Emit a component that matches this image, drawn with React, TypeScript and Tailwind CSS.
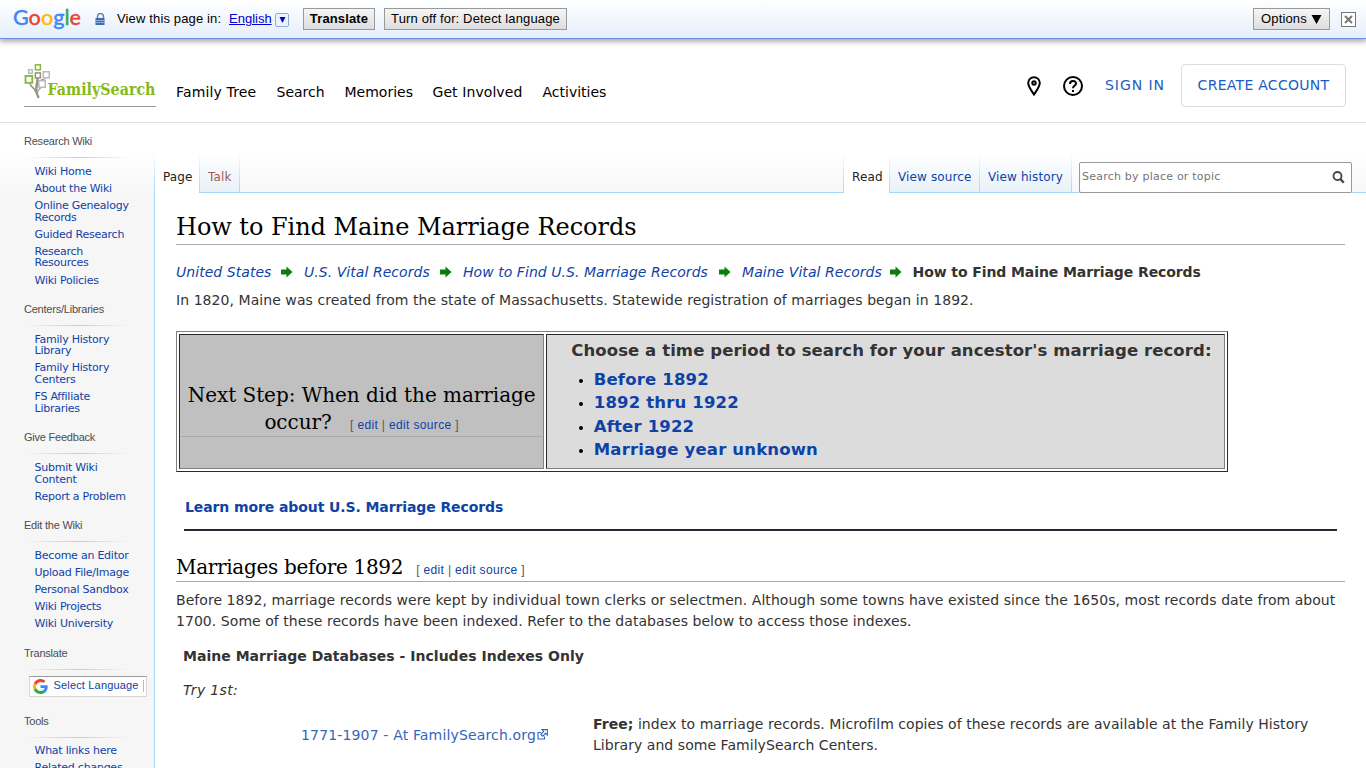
import React from 'react';

type NavGroup = { title: string; items: string[][] };

// each item is a list of text lines
const GROUPS: NavGroup[] = [
  {
    title: 'Research Wiki',
    items: [['Wiki Home'], ['About the Wiki'], ['Online Genealogy', 'Records'], ['Guided Research'], ['Research', 'Resources'], ['Wiki Policies']],
  },
  {
    title: 'Centers/Libraries',
    items: [['Family History', 'Library'], ['Family History', 'Centers'], ['FS Affiliate', 'Libraries']],
  },
  {
    title: 'Give Feedback',
    items: [['Submit Wiki', 'Content'], ['Report a Problem']],
  },
  {
    title: 'Edit the Wiki',
    items: [['Become an Editor'], ['Upload File/Image'], ['Personal Sandbox'], ['Wiki Projects'], ['Wiki University']],
  },
];

const PERIODS = ['Before 1892', '1892 thru 1922', 'After 1922', 'Marriage year unknown'];

const CRUMBS = [
  { label: 'United States', width: 'w-[95px]' },
  { label: 'U.S. Vital Records', width: 'w-[126px]' },
  { label: 'How to Find U.S. Marriage Records', width: 'w-[246px]' },
  { label: 'Maine Vital Records', width: 'w-[137.500px]' },
];

const GoogleLogo = () => (
  <svg width="72" height="30" viewBox="0 0 72 30" className="shrink-0 overflow-visible">
    <text x="1" y="20" fontFamily="Lato, 'Open Sans', sans-serif" fontSize="22" fontWeight="500" strokeWidth="0.3" textLength="68" lengthAdjust="spacingAndGlyphs">
      <tspan fill="#4285f4" stroke="#4285f4">G</tspan>
      <tspan fill="#ea4335" stroke="#ea4335">o</tspan>
      <tspan fill="#fbbc05" stroke="#fbbc05">o</tspan>
      <tspan fill="#4285f4" stroke="#4285f4">g</tspan>
      <tspan fill="#34a853" stroke="#34a853">l</tspan>
      <tspan fill="#ea4335" stroke="#ea4335">e</tspan>
    </text>
  </svg>
);

const FamilySearchLogo = () => (
  <svg width="133" height="42" viewBox="0 0 133 42" className="overflow-visible">
    <g fill="none" stroke="#9a9187" strokeLinecap="round">
      <path d="M13.500 14c0 5-1.500 8-1.200 12 .2 3 .7 5 2 7" strokeWidth="2.400" />
      <path d="M6 19.500c.5 3.500 4 3.500 5.500 8" strokeWidth="1.600" />
      <path d="M21 15c-3 0-6 1-7.500 7M17 23.500c-1.500 1-3 2-3.500 5" strokeWidth="1.200" />
    </g>
    <g fill="#fff" strokeWidth="1.500">
      <rect x="11.400" y="0.800" width="5" height="5" stroke="#87b940" />
      <rect x="4.700" y="5.700" width="3.600" height="3.600" stroke="#b9b9b9" />
      <rect x="11.400" y="8.900" width="5" height="5" stroke="#9a9187" />
      <rect x="19.300" y="7.800" width="6" height="6" stroke="#b9b9b9" />
      <rect x="1.500" y="12" width="6.800" height="6.800" stroke="#87b940" strokeWidth="1.900" />
      <rect x="14.800" y="16.700" width="6.500" height="6.500" stroke="#b9b9b9" />
    </g>
    <text x="23.500" y="31" fill="#87b914" fontFamily="'DejaVu Serif', serif" fontSize="16.5" fontWeight="700" textLength="108" lengthAdjust="spacingAndGlyphs">
      FamilySearch
    </text>
  </svg>
);

const GoogleG = () => (
  <svg width="15" height="15" viewBox="0 0 48 48">
    <path fill="#ea4335" d="M24 9.5c3.5 0 6.700 1.200 9.200 3.600l6.900-6.900C35.900 2.400 30.500 0 24 0 14.600 0 6.500 5.400 2.600 13.200l8 6.200C12.400 13.700 17.700 9.500 24 9.500z" />
    <path fill="#4285f4" d="M47 24.500c0-1.600-.2-3.100-.4-4.500H24v9h12.900c-.6 3-2.300 5.500-4.800 7.200l7.700 6C44.400 38 47 31.800 47 24.500z" />
    <path fill="#fbbc05" d="M10.500 28.600a14.500 14.500 0 0 1 0-9.200l-8-6.200a24 24 0 0 0 0 21.600l8-6.200z" />
    <path fill="#34a853" d="M24 48c6.500 0 11.900-2.100 15.900-5.800l-7.700-6c-2.200 1.500-4.900 2.300-8.200 2.300-6.300 0-11.600-4.200-13.500-9.900l-8 6.200C6.500 42.600 14.600 48 24 48z" />
  </svg>
);

const GreenArrow = () => (
  <svg width="12" height="12" viewBox="0 0 12 12" className="mr-[11px] ml-[10px] shrink-0">
    <path d="M0 3.500h5.500V0.500L11.500 6 5.500 11.500v-3H0z" fill="#0a800a" />
  </svg>
);

const EditLinks = () => (
  <span className="font-['Liberation_Sans',Arial,sans-serif] text-[12px] tracking-[0.350px] text-[#54595d]">
    [ <a className="text-[#0f42a6]">edit</a> | <a className="text-[#0f42a6]">edit source</a> ]
  </span>
);

const SideHeading = ({ children }: { children: React.ReactNode }) => (
  <>
    <h3 className="h-4 text-[11px] leading-4 tracking-[-0.220px] text-[#4d4d4d] font-['Liberation_Sans',Arial,sans-serif]">{children}</h3>
    <div className="mt-2 ml-[2px] h-px w-[104px] bg-linear-to-r from-transparent via-[#c8ccd1] to-transparent" />
  </>
);

const SideLinks = ({ items }: { items: string[][] }) => (
  <ul className="pt-[7.700px] pl-[10.500px] text-[11px] leading-[11.700px] tracking-[-0.240px] whitespace-nowrap text-[#0f42a6]">
    {items.map((lines) => (
      <li key={lines.join(' ')} className="pb-[5.400px]">
        {lines.map((line) => (
          <span key={line} className="block">{line}</span>
        ))}
      </li>
    ))}
  </ul>
);

const TranslateBar = () => (
  <div className="relative z-10 flex h-[39px] items-start border-b border-[#6b90da] bg-linear-to-b from-white to-[#e5effb] pt-2 pl-3 text-[13px] tracking-[0.140px] text-black shadow-[0_1px_6px_1px_rgba(0,0,0,0.4)] font-['Liberation_Sans',Arial,sans-serif]">
    <div className="-mt-[3px] tracking-normal"><GoogleLogo /></div>
    <svg width="11" height="12" viewBox="0 0 11 12" className="mt-[5px] ml-[11px]">
      <path d="M2.500 5V3.500a3 3 0 0 1 6 0V5" fill="none" stroke="#5b7fae" strokeWidth="1.400" />
      <rect x="0.500" y="5" width="9" height="7" fill="#3c6cb4" />
      <path d="M1 7.500h8M1 9.500h8" stroke="#a9c0e2" strokeWidth="0.800" />
    </svg>
    <span className="mt-[2px] ml-[11px] w-28 leading-[18px] whitespace-nowrap">View this page in:</span>
    <span className="mt-[2px] w-[43px] leading-[18px] tracking-normal text-[#0000cc] underline">English</span>
    <span className="mt-[5px] ml-[3px] flex h-[14px] w-[14px] items-center justify-center rounded-[2px] border border-[#93a9d8] bg-[#eef4ff]">
      <svg width="7" height="6" viewBox="0 0 7 6"><path d="M0.500 0h6L3.500 6z" fill="#0000cc" /></svg>
    </span>
    <button className="ml-[14px] h-[22px] w-[72px] border border-[#999] bg-linear-to-b from-[#f6f6f6] to-[#ddd] leading-5 font-bold whitespace-nowrap">Translate</button>
    <button className="ml-[9px] h-[22px] w-[183px] border border-[#999] bg-linear-to-b from-[#f6f6f6] to-[#ddd] leading-5 whitespace-nowrap">Turn off for: Detect language</button>
    <button className="ml-auto flex h-[22px] w-[77px] items-center justify-center gap-1 border border-[#999] bg-linear-to-b from-[#f6f6f6] to-[#ddd]">
      Options
      <svg width="11" height="9" viewBox="0 0 11 9"><path d="M0.500 0h10L5.500 9z" /></svg>
    </button>
    <span className="mt-1 mr-[10px] ml-[11px] flex h-[15px] w-[15px] items-center justify-center border border-[#777] bg-white">
      <svg width="9" height="9" viewBox="0 0 9 9"><path d="M1 1l7 7M8 1L1 8" stroke="#777" strokeWidth="2" /></svg>
    </span>
  </div>
);

const SiteHeader = () => (
  <header className="flex h-[84px] items-start border-b border-[#e0e0e0] bg-white text-[14px] text-black">
    <div className="mt-[25px] ml-6 h-[43px] w-[132px] border-b border-[#999] whitespace-nowrap">
      <FamilySearchLogo />
    </div>
    <nav className="mt-[43px] ml-5 flex leading-5 whitespace-nowrap">
      <span className="w-[100.500px] tracking-[0.150px]">Family Tree</span>
      <span className="w-[68px]">Search</span>
      <span className="w-[88px]">Memories</span>
      <span className="w-[110px] tracking-[0.080px]">Get Involved</span>
      <span>Activities</span>
    </nav>
    <div className="mt-[25px] mr-5 ml-auto flex h-[43px] items-center whitespace-nowrap text-[#1b5cc4]">
      <svg width="14" height="20" viewBox="0 0 14 20" fill="none" stroke="#000" strokeWidth="2">
        <path d="M7 18.500C4 14 1.200 10.500 1.200 7a5.800 5.800 0 0 1 11.600 0c0 3.500-2.800 7-5.800 11.500z" />
        <circle cx="7" cy="7" r="1.700" />
      </svg>
      <svg width="20" height="20" viewBox="0 0 20 20" fill="none" stroke="#000" strokeWidth="2" className="ml-[22px]">
        <circle cx="10" cy="10" r="9" />
        <path d="M7 8c0-4 6-4 6-.5 0 2.300-3 2.300-3 4.700" />
        <path d="M10 14v2" />
      </svg>
      <span className="ml-[22px] w-[76px] tracking-[0.950px]">SIGN IN</span>
      <button className="h-[43px] w-[165px] rounded-[4px] border border-[#dcdcdc] tracking-[0.280px]">CREATE ACCOUNT</button>
    </div>
  </header>
);

const Sidebar = () => (
  <aside className="w-[154px] shrink-0 pt-[10px] pl-6">
    {GROUPS.map((g) => (
      <section key={g.title} className="mb-[9.300px]">
        <SideHeading>{g.title}</SideHeading>
        <SideLinks items={g.items} />
      </section>
    ))}
    <section className="mb-4">
      <SideHeading>Translate</SideHeading>
      <div className="mt-[6px] ml-[5px] flex h-[21px] w-[118px] items-center border border-[#d5d5d5] border-t-[#9b9b9b] bg-white pl-[3px] font-['Liberation_Sans',Arial,sans-serif] text-[11px] whitespace-nowrap text-[#0f42a6]">
        <GoogleG />
        <span className="-mt-[2px] ml-[5.500px] w-[89px] tracking-[0.170px]">Select Language</span>
        <span className="h-3 w-px bg-[#bbb]" />
      </div>
    </section>
    <section>
      <SideHeading>Tools</SideHeading>
      <SideLinks items={[['What links here'], ['Related changes']]} />
    </section>
  </aside>
);

// vertical hairline that fades in towards the baseline of the tabs
const TabEdge = () => <i className="h-[39px] w-px shrink-0 bg-linear-to-b from-transparent to-[#a7d7f9]" />;

const Tab = ({ width, className = '', children }: { width: string; className?: string; children: React.ReactNode }) => (
  <>
    <span className={`${width} h-[39px] bg-linear-to-b from-white to-[#e8f2f8] pt-[8px] pl-2 ${className}`}>{children}</span>
    <TabEdge />
  </>
);

const ActiveTab = ({ width, children }: { width: string; children: React.ReactNode }) => (
  <>
    <TabEdge />
    <span className={`${width} -mb-px h-[40px] bg-white pt-[8px] pl-2 text-[#222]`}>{children}</span>
    <TabEdge />
  </>
);

const Tabs = () => (
  <div className="flex h-[70px] items-end border-b border-[#a7d7f9] text-[12px] leading-8 tracking-[0.120px] whitespace-nowrap text-[#0f42a6]">
    <ActiveTab width="w-[44px]">Page</ActiveTab>
    <Tab width="w-[39px]" className="text-[#a55858]">Talk</Tab>
    <div className="ml-auto flex items-end">
      <ActiveTab width="w-[45px]">Read</ActiveTab>
      <Tab width="w-[89px]">View source</Tab>
      <Tab width="w-[91px]">View history</Tab>
    </div>
    <div className="-mb-px mr-[14px] ml-[7px] flex h-[31px] w-[273px] items-center justify-between rounded-[2px] border border-[#999] bg-white pr-[6px] pl-[2px] text-[11px] text-[#757575]">
      <span className="-mt-[2px] tracking-[0.220px]">Search by place or topic</span>
      <svg width="13" height="13" viewBox="0 0 13 13" fill="none" stroke="#444" strokeWidth="1.800">
        <circle cx="5.500" cy="5" r="4" />
        <path d="M8.300 8l3.500 3.700" strokeWidth="2.300" />
      </svg>
    </div>
  </div>
);

const Article = () => (
  <main className="h-[575px] overflow-hidden border-l border-[#a7d7f9] bg-white pr-[21px] pl-[21px] text-[14px] leading-[21px] tracking-[0.050px] text-[#333]">
    <h1 className="h-[52px] border-b border-[#aaa] pt-[17px] font-['DejaVu_Serif',serif] text-[24px] leading-[34px] tracking-[-0.050px] whitespace-nowrap text-black">
      How to Find Maine Marriage Records
    </h1>
    <div className="mt-[16px] flex h-[22px] items-center whitespace-nowrap">
      {CRUMBS.map((c) => (
        <React.Fragment key={c.label}>
          <a className={`${c.width} shrink-0 text-[#0f42a6] italic`}>{c.label}</a>
          <GreenArrow />
        </React.Fragment>
      ))}
      <b className="tracking-[-0.090px]">How to Find Maine Marriage Records</b>
    </div>
    <p className="mt-[7px] tracking-[0.060px] whitespace-nowrap">
      In 1820, Maine was created from the state of Massachusetts. Statewide registration of marriages began in 1892.
    </p>

    <div className="mt-[20px] flex h-[141px] w-[1052px] gap-[2px] border border-[#2b2b2b] border-t-[#808080] border-l-[#808080] p-[2px]">
      <div className="w-[366px] border border-[#808080] border-t-[#2b2b2b] border-l-[#2b2b2b] bg-[#c0c0c0] px-px pt-[47px]">
        <h2 className="h-[55px] border-b border-[#aaa] text-center font-['DejaVu_Serif',serif] text-[20px] leading-[27px] tracking-[-0.050px] whitespace-nowrap text-black">
          Next Step: When did the marriage
          <br />
          occur? <span className="ml-3"><EditLinks /></span>
        </h2>
      </div>
      <div className="w-[680px] border border-[#808080] border-t-[#2b2b2b] border-l-[#2b2b2b] bg-[#dcdcdc] pt-1 pl-6 text-[16.500px] font-bold tracking-[0.080px] whitespace-nowrap">
        <p className="leading-6">Choose a time period to search for your ancestor's marriage record:</p>
        <ul className="mt-[5px] list-disc pl-[22.500px] leading-[23.400px] tracking-[0.160px] marker:text-[13px] marker:text-black">
          {PERIODS.map((p) => (
            <li key={p}><a className="text-[#0f42a6]">{p}</a></li>
          ))}
        </ul>
      </div>
    </div>

    <div className="mx-2 mt-[25px] h-[34px] border-b-2 border-[#2b2533] pl-px">
      <a className="font-bold tracking-[-0.100px] text-[#0f42a6]">Learn more about U.S. Marriage Records</a>
    </div>

    <h2 className="mt-[20px] flex h-[31px] items-baseline border-b border-[#aaa] pt-[3px] font-['DejaVu_Serif',serif] text-[20px] leading-[27px] tracking-[-0.320px] whitespace-nowrap text-black">
      Marriages before 1892 <span className="ml-[13px]"><EditLinks /></span>
    </h2>
    <p className="mt-[8px] whitespace-nowrap">
      Before 1892, marriage records were kept by individual town clerks or selectmen. Although some towns have existed since the 1650s, most records date from about
      <br />
      1700. Some of these records have been indexed. Refer to the databases below to access those indexes.
    </p>
    <div className="pl-[7px] whitespace-nowrap">
      <p className="mt-[14px] font-bold tracking-[0.020px]">Maine Marriage Databases - Includes Indexes Only</p>
      <p className="mt-[13px] tracking-[0.350px] italic">Try 1st:</p>
      <div className="mt-[13px] flex items-center">
        <div className="flex w-[410px] items-center pl-[118px] tracking-[0.160px] text-[#3366bb]">
          1771-1907 - At FamilySearch.org
          <svg width="11" height="11" viewBox="0 0 11 11" fill="none" stroke="#3366bb" strokeWidth="1.100" className="mb-px ml-px">
            <path d="M4 3.500H1v6.500h6.500V7.500" />
            <path d="M5 .6h5.400V6L8.600 4.300 5.700 7.200 3.800 5.300l2.900-2.900z" fill="#fff" />
          </svg>
        </div>
        <p>
          <b>Free;</b> index to marriage records. Microfilm copies of these records are available at the Family History
          <br />
          Library and some FamilySearch Centers.
        </p>
      </div>
    </div>
  </main>
);

export default function App() {
  return (
    <div className="h-[768px] w-[1366px] overflow-hidden bg-[#f6f6f6] font-['DejaVu_Sans',Verdana,sans-serif]">
      <TranslateBar />
      <SiteHeader />
      <div className="flex h-[645px] bg-[linear-gradient(to_bottom,#fff_0,#fff_30px,#f6f6f6_75px)]">
        <Sidebar />
        <div className="min-w-0 flex-1">
          <Tabs />
          <Article />
        </div>
      </div>
    </div>
  );
}
